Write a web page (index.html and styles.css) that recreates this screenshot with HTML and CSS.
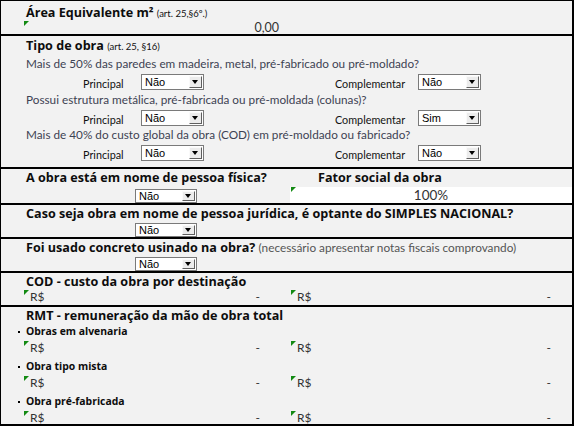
FILE: index.html
```html
<!DOCTYPE html>
<html lang="pt-BR">
<head>
<meta charset="utf-8">
<title>Formulário</title>
<link rel="stylesheet" href="styles.css">
</head>
<body>
<div class="sheet">
  <section class="sec sec-area">
    <h2 class="title">Área Equivalente m² <small class="ref">(art. 25,§6º.)</small></h2>
    <div class="cols">
      <div class="cell-val flag">0,00</div>
    </div>
  </section>

  <section class="sec sec-tipo">
    <h2 class="title">Tipo de obra <small class="ref">(art. 25, §16)</small></h2>
    <p class="q">Mais de 50% das paredes em madeira, metal, pré-fabricado ou pré-moldado?</p>
    <div class="pick-row">
      <div class="pick"><span class="pick-lbl">Principal</span><span class="select"><span class="select-val">Não</span><span class="select-btn"></span></span></div>
      <div class="pick pick-comp"><span class="pick-lbl">Complementar</span><span class="select"><span class="select-val">Não</span><span class="select-btn"></span></span></div>
    </div>
    <p class="q q2">Possui estrutura metálica, pré-fabricada ou pré-moldada (colunas)?</p>
    <div class="pick-row">
      <div class="pick"><span class="pick-lbl">Principal</span><span class="select"><span class="select-val">Não</span><span class="select-btn"></span></span></div>
      <div class="pick pick-comp"><span class="pick-lbl">Complementar</span><span class="select"><span class="select-val">Sim</span><span class="select-btn"></span></span></div>
    </div>
    <p class="q q3">Mais de 40% do custo global da obra (COD) em pré-moldado ou fabricado?</p>
    <div class="pick-row">
      <div class="pick"><span class="pick-lbl">Principal</span><span class="select"><span class="select-val">Não</span><span class="select-btn"></span></span></div>
      <div class="pick pick-comp"><span class="pick-lbl">Complementar</span><span class="select"><span class="select-val">Não</span><span class="select-btn"></span></span></div>
    </div>
  </section>

  <section class="sec sec-social">
    <div class="social-grid">
      <h2 class="title">A obra está em nome de pessoa física?</h2>
      <h2 class="title title-right">Fator social da obra</h2>
      <div class="select-cell"><span class="select select-sm"><span class="select-val">Não</span><span class="select-btn"></span></span></div>
      <div class="field flag flag-r">100%</div>
    </div>
  </section>

  <section class="sec sec-q">
    <h2 class="title">Caso seja obra em nome de pessoa jurídica, é optante do SIMPLES NACIONAL?</h2>
    <div class="select-cell"><span class="select select-sm"><span class="select-val">Não</span><span class="select-btn"></span></span></div>
  </section>

  <section class="sec sec-q">
    <h2 class="title">Foi usado concreto usinado na obra? <span class="note">(necessário apresentar notas fiscais comprovando)</span></h2>
    <div class="select-cell"><span class="select select-sm"><span class="select-val">Não</span><span class="select-btn"></span></span></div>
  </section>

  <section class="sec sec-cod">
    <h2 class="title">COD - custo da obra por destinação</h2>
    <div class="cols">
      <div class="money flag"><span>R$</span><span>-</span></div>
      <div class="money money-r flag flag-r"><span>R$</span><span>-</span></div>
    </div>
  </section>

  <section class="sec sec-rmt">
    <h2 class="title">RMT - remuneração da mão de obra total</h2>
    <div class="grp">
      <h3 class="sub">Obras em alvenaria</h3>
      <div class="cols">
        <div class="money flag"><span>R$</span><span>-</span></div>
        <div class="money money-r flag flag-r"><span>R$</span><span>-</span></div>
      </div>
    </div>
    <div class="grp">
      <h3 class="sub">Obra tipo mista</h3>
      <div class="cols">
        <div class="money flag"><span>R$</span><span>-</span></div>
        <div class="money money-r flag flag-r"><span>R$</span><span>-</span></div>
      </div>
    </div>
    <div class="grp">
      <h3 class="sub">Obra pré-fabricada</h3>
      <div class="cols">
        <div class="money flag"><span>R$</span><span>-</span></div>
        <div class="money money-r flag flag-r"><span>R$</span><span>-</span></div>
      </div>
    </div>
  </section>
</div>
</body>
</html>
```

FILE: styles.css
```css
* {
  box-sizing: border-box;
  margin: 0;
  padding: 0;
}

body {
  margin: 0;
  background: #ffffff;
  font-family: Lato, "Open Sans", sans-serif;
  color: #000;
}

.sheet {
  width: 574px;
  height: 426px;
  background: #f2f2f2;
  border: 1px solid #000;
  border-right-width: 2px;
  border-bottom-width: 2px;
}

.sec {
  border-bottom: 2px solid #000;
}

.sec:last-child {
  border-bottom: 0;
}

.title {
  font: 700 12.6px/16px "Open Sans", sans-serif;
  color: #0d0d0d;
  padding-left: 25px;
  white-space: nowrap;
}

.ref {
  font: 400 9.5px Lato, sans-serif;
  color: #111;
}

.note {
  font: 400 11.8px Lato, sans-serif;
  color: #555;
}

.cols {
  display: grid;
  grid-template-columns: 289px 1fr;
}

.flag {
  position: relative;
}

.flag::before {
  content: "";
  position: absolute;
  left: 23px;
  top: 0;
  border-top: 5px solid #138a13;
  border-right: 5px solid transparent;
}

.flag-r::before {
  left: 1px;
}

/* Área */
.sec-area {
  height: 35px;
  padding-top: 4px;
}

.cell-val {
  height: 13px;
  line-height: 13px;
  font-size: 12.5px;
  color: #333;
  text-align: right;
  padding-right: 11px;
}

/* Tipo de obra */
.sec-tipo {
  height: 133px;
  padding-top: 2px;
}

.q {
  font: 400 11.75px/14px Lato, sans-serif;
  color: #3d4252;
  padding-left: 25px;
  margin-top: 3px;
}

.q2 {
  margin-top: 2px;
}

.q3 {
  margin-top: 1px;
}

.pick-row {
  display: grid;
  grid-template-columns: 289px 1fr;
  height: 18px;
  margin-top: 2px;
}

.pick {
  display: flex;
  align-items: center;
  padding-left: 82px;
}

.pick-comp {
  padding-left: 45px;
}

.pick-lbl {
  font: 400 10.8px Lato, sans-serif;
  color: #111;
  width: 58px;
  padding-top: 2px;
}

.pick-comp .pick-lbl {
  width: 83px;
}

/* dropdown */
.select {
  display: flex;
  align-items: center;
  justify-content: space-between;
  width: 63px;
  height: 16px;
  background: #fff;
  border: 1px solid #7a7a7a;
  padding-left: 3px;
  padding-right: 1px;
}

.select-val {
  font: 400 11px "Liberation Sans", Arial, sans-serif;
  color: #000;
}

.select-btn {
  position: relative;
  width: 13px;
  height: 12px;
  background: #ececec;
  border: 1px solid;
  border-color: #fafafa #5f5f5f #5f5f5f #fafafa;
}

.select-btn::after {
  content: "";
  position: absolute;
  left: 2px;
  top: 3px;
  border-left: 3.5px solid transparent;
  border-right: 3.5px solid transparent;
  border-top: 4px solid #000;
}

.select-sm {
  height: 14px;
  width: 62px;
}

.select-sm .select-btn {
  height: 10px;
}

.select-sm .select-btn::after {
  top: 2px;
}

/* Fator social */
.sec-social {
  height: 36px;
  padding-top: 1px;
}

.social-grid {
  display: grid;
  grid-template-columns: 289px 1fr;
  grid-template-rows: 17px 16px;
}

.title-right {
  padding-left: 28px;
}

.select-cell {
  display: flex;
  align-items: flex-end;
  padding-left: 134px;
}

.field {
  background: #fff;
  text-align: center;
  font: 400 13.5px/16px Lato, sans-serif;
  color: #333;
}

/* simple question sections */
.sec-q {
  height: 34px;
  display: flex;
  flex-direction: column;
}

.sec-q .title {
  line-height: 17px;
}

.sec-q .select-cell {
  flex: 1;
}

/* money */
.sec-cod {
  height: 34px;
}

.sec-cod .title {
  line-height: 17px;
}

.money {
  display: flex;
  justify-content: space-between;
  height: 14px;
  line-height: 14px;
  font-size: 12px;
  color: #333;
  padding-left: 29px;
  padding-right: 30px;
}

.money-r {
  padding-left: 7px;
  padding-right: 21px;
}

/* RMT */
.sec-rmt {
  height: 117px;
}

.sec-rmt .title {
  line-height: 18px;
}

.grp + .grp {
  margin-top: 5px;
}

.sub {
  display: flex;
  align-items: center;
  font: 700 10.4px/13px "Open Sans", sans-serif;
  color: #0d0d0d;
  padding-left: 17px;
  margin-bottom: 3px;
}

.sub::before {
  content: "";
  width: 2px;
  height: 2px;
  background: #000;
  margin-right: 6px;
}
```
